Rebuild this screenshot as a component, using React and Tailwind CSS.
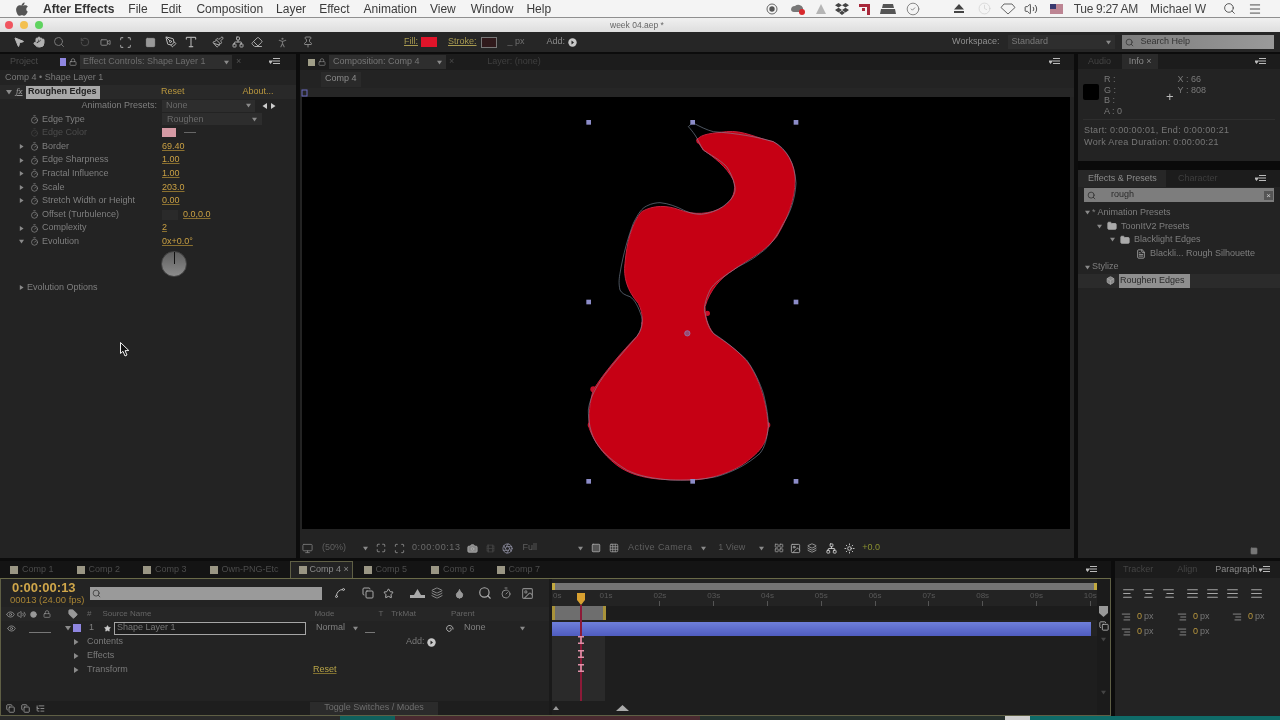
import React from "react";
import {
  MousePointer2, Hand, Search, RotateCcw, Video, Scan, Square, PenTool, Type, Paintbrush, Eraser,
  PersonStanding, Pin, Timer, Lock, Folder, FileText, Camera, Grid3x3, Eye, Volume2, Circle, Tag, Star,
  CheckCircle2, Layers, Box, Clock, Film, Image as ImageIcon, Sun, Network, Monitor, Maximize, Menu,
  AlignLeft, AlignCenter, AlignRight, AlignJustify, Aperture, LayoutGrid, Copy, Spline, Droplet, ListTree,
} from "lucide-react";

const Tri = ({ dir = "r", c = "#8a8a8a", s = 6 }) => (
  <svg width={s} height={s} viewBox="0 0 6 6" className="shrink-0">
    <path d={dir === "r" ? "M1 0 L5.5 3 L1 6Z" : dir === "l" ? "M5 0 L.5 3 L5 6Z" : "M0 1 L6 1 L3 5.5Z"} fill={c} />
  </svg>
);

const PanelMenu = ({ className = "" }) => (
  <svg width="11" height="8" viewBox="0 0 11 8" className={"shrink-0 " + className}>
    <path d="M0 3 L3 3 L1.5 5Z M4 0.5h7M4 3h7M4 5.5h7" fill="#bbb" stroke="#bbb" strokeWidth="1.2" />
  </svg>
);

const AddBtn = () => (
  <svg width="9" height="9" viewBox="0 0 9 9" className="shrink-0">
    <circle cx="4.5" cy="4.5" r="4.2" fill="#c8c8c8" />
    <path d="M3.5 2.5 L6 4.5 L3.5 6.5Z" fill="#222" />
  </svg>
);

function MenuBar() {
  return (
    <div className="h-[18px] shrink-0 bg-[#f4f4f4] border-b border-[#8f8f8f] flex items-center text-[12px] text-[#3a3a3a] relative">
      <svg width="12" height="14" viewBox="0 0 12 14" className="ml-[16px] shrink-0">
        <path fill="#555" d="M8.6 0.5c.1 1-.3 1.9-.9 2.6-.6.7-1.5 1.2-2.3 1.1-.1-.9.4-1.9.9-2.5C6.9 1 7.900.6 8.600.5zM11.500 10c-.3.8-.5 1.100-.9 1.800-.6.900-1.400 2-2.400 2-.9 0-1.100-.6-2.300-.6s-1.500.6-2.300.6c-1 0-1.800-1-2.300-1.900C-.2 9.300-.3 6.500.9 4.900c.7-1 1.800-1.600 2.900-1.600 1.100 0 1.800.6 2.700.6.900 0 1.400-.6 2.700-.6 1 0 2 .5 2.600 1.400-2.300 1.300-1.900 4.500.7 5.300z" />
      </svg>
      <span className="ml-[15px] font-bold text-[#333]">After Effects</span>
      <span className="ml-[14px]">File</span>
      <span className="ml-[13px]">Edit</span>
      <span className="ml-[15px]">Composition</span>
      <span className="ml-[13px]">Layer</span>
      <span className="ml-[13px]">Effect</span>
      <span className="ml-[14px]">Animation</span>
      <span className="ml-[13px]">View</span>
      <span className="ml-[15px]">Window</span>
      <span className="ml-[13px]">Help</span>
      <div className="ml-auto flex items-center text-[#444]">
        <svg width="12" height="12" viewBox="0 0 12 12" className="shrink-0"><circle cx="6" cy="6" r="5" fill="none" stroke="#666" /><circle cx="6" cy="6" r="2.700" fill="#555" /></svg>
        <svg width="16" height="12" viewBox="0 0 16 12" className="ml-[12px] shrink-0"><path d="M1 7a4 4 0 0 1 4-4 5 5 0 0 1 8 2v4H4a3 3 0 0 1-3-2z" fill="#777" /><circle cx="12" cy="9" r="3" fill="#d8282c" /></svg>
        <svg width="12" height="12" viewBox="0 0 12 12" className="ml-[9px] shrink-0"><path d="M6 1 L11 11 H1Z" fill="#b5b5b5" /></svg>
        <svg width="14" height="12" viewBox="0 0 14 12" className="ml-[8px] shrink-0"><path d="M3.500 0 L7 2.300 L3.500 4.600 L0 2.300Z M10.500 0 L14 2.300 L10.500 4.600 L7 2.300Z M3.500 4.800 L7 7.100 L3.500 9.400 L0 7.100Z M10.500 4.800 L14 7.100 L10.500 9.400 L7 7.100Z M7 7.800 L10 9.800 L7 12 L4 9.800Z" fill="#444" /></svg>
        <svg width="11" height="12" viewBox="0 0 11 12" className="ml-[10px] shrink-0"><path d="M0 1h11v11H8V4H0z M3 5h3v3H3z" fill="#a8283a" /></svg>
        <svg width="16" height="10" viewBox="0 0 16 10" className="ml-[10px] shrink-0"><path d="M3 0h10l1 4H2z M1 5h14l1 5H0z" fill="#555" /></svg>
        <CheckCircle2 size={14} strokeWidth={1.500} className="ml-[10px] text-[#777] shrink-0" />
        <svg width="10" height="9" viewBox="0 0 10 9" className="ml-[34px] shrink-0"><path d="M5 0 L10 5.500 H0Z M0 7h10v2H0z" fill="#444" /></svg>
        <Clock size={13} strokeWidth={1.200} className="ml-[14px] text-[#ccc] shrink-0" />
        <svg width="16" height="12" viewBox="0 0 16 12" className="ml-[9px] shrink-0"><path d="M4 1h8l3 3.500L8 11 1 4.500z" fill="none" stroke="#666" /></svg>
        <Volume2 size={14} strokeWidth={1.600} className="ml-[8px] text-[#444] shrink-0" />
        <svg width="13" height="10" viewBox="0 0 13 10" className="ml-[12px] shrink-0"><rect width="13" height="10" fill="#c9c9d6" /><path d="M0 1h13M0 3h13M0 5h13M0 7h13M0 9h13" stroke="#b04050" /><rect width="6" height="5" fill="#39396f" /></svg>
        <span className="ml-[11px] whitespace-nowrap tracking-[-0.300px]">Tue 9:27 AM</span>
        <span className="ml-[12px] whitespace-nowrap">Michael W</span>
        <Search size={13} strokeWidth={1.600} className="ml-[17px] text-[#444] shrink-0" />
        <Menu size={14} strokeWidth={1.600} className="ml-[12px] mr-[18px] text-[#444] shrink-0" />
      </div>
    </div>
  );
}

function TitleBar() {
  return (
    <div className="h-[14px] shrink-0 bg-gradient-to-b from-[#f0f0f0] to-[#dedede] flex items-center relative">
      <div className="flex gap-[7px] pl-[5px]">
        <div className="w-[8px] h-[8px] rounded-full bg-[#f0555f]" />
        <div className="w-[8px] h-[8px] rounded-full bg-[#f3c04f]" />
        <div className="w-[8px] h-[8px] rounded-full bg-[#5fd35f]" />
      </div>
      <span className="absolute left-[610px] text-[8.500px] text-[#666] whitespace-nowrap">week 04.aep *</span>
    </div>
  );
}

function Toolbar() {
  return (
    <div className="h-[22px] shrink-0 bg-[#262626] border-b-2 border-[#0c0c0c] flex items-center text-[9px] text-[#7d7d7d]">
      <MousePointer2 size={12} className="ml-[13px] text-[#b8b8b8] shrink-0" fill="#b8b8b8" />
      <Hand size={12} className="ml-[8px] text-[#b0b0b0] shrink-0" fill="#b0b0b0" />
      <Search size={12} className="ml-[8px] text-[#777] shrink-0" />
      <RotateCcw size={10} className="ml-[15px] text-[#555] shrink-0" />
      <Video size={11} className="ml-[10px] text-[#888] shrink-0" />
      <Scan size={13} className="ml-[8px] text-[#999] shrink-0" />
      <Square size={11} className="ml-[13px] text-[#999] shrink-0" fill="#999" />
      <PenTool size={12} className="ml-[9px] text-[#bbb] shrink-0" />
      <Type size={14} className="ml-[7px] text-[#aaa] shrink-0" />
      <Paintbrush size={12} className="ml-[14px] text-[#aaa] shrink-0" />
      <Network size={12} className="ml-[8px] text-[#aaa] shrink-0" />
      <Eraser size={12} className="ml-[7px] text-[#aaa] shrink-0" />
      <PersonStanding size={13} className="ml-[13px] text-[#777] shrink-0" />
      <Pin size={12} className="ml-[13px] text-[#888] shrink-0" />
      <span className="ml-[90px] text-[#a89a50] underline">Fill:</span>
      <div className="ml-[3px] w-[16px] h-[10px] bg-[#e0142a] shrink-0" />
      <span className="ml-[11px] text-[#a89a50] underline">Stroke:</span>
      <div className="ml-[4px] w-[16px] h-[11px] bg-[#301a1c] border border-[#777] shrink-0" />
      <span className="ml-[11px] text-[#6f6f6f]">_ px</span>
      <span className="ml-[22px] text-[#8a8a8a]">Add:</span>
      <div className="ml-[3px]"><AddBtn /></div>
      <span className="ml-[375px] whitespace-nowrap text-[#8f8f8f]">Workspace:</span>
      <div className="ml-[9px] w-[107px] h-[14px] bg-[#2e2e2e] flex items-center justify-between pl-[3px] pr-[4px] text-[#7a7a7a]">
        <span>Standard</span><Tri dir="d" s={5} />
      </div>
      <div className="ml-[7px] w-[152px] h-[14px] bg-gradient-to-r from-[#7c7c7c] to-[#9a9a9a] flex items-center pl-[3px] text-[#333]">
        <Search size={9} className="text-[#333] shrink-0" />
        <span className="ml-[6px]">Search Help</span>
      </div>
    </div>
  );
}

const S = ({ off }) => <Timer size={9} strokeWidth={1.800} className={off ? "text-[#444] shrink-0" : "text-[#8f8f8f] shrink-0"} />;

const Row = ({ tri, label, value, dim, children }) => (
  <div className="h-[13.600px] flex items-center pl-[19px]">
    <div className="w-[11px] flex">{tri && <Tri dir={tri} s={5} />}</div>
    <div className="w-[12px] flex"><S off={dim} /></div>
    <span className={"w-[120px] whitespace-nowrap " + (dim ? "text-[#4c4c4c]" : "text-[#7f7f7f]")}>{label}</span>
    {value && <span className="text-[#c9a043] underline decoration-[#8a7030]">{value}</span>}
    {children}
  </div>
);

function EffectPanel() {
  return (
    <div className="w-[296px] shrink-0 bg-[#232323] flex flex-col text-[9px] overflow-hidden">
      <div className="h-[16px] shrink-0 bg-[#1c1c1c] flex items-center text-[#4a4a4a]">
        <span className="ml-[10px]">Project</span>
        <div className="ml-[22px] w-[6px] h-[8px] bg-[#8f86e0] shrink-0" />
        <Lock size={8} className="ml-[3px] text-[#999] shrink-0" />
        <div className="ml-[3px] w-[152px] h-[14px] bg-[#2e2e2e] flex items-center px-[3px] justify-between text-[#6e6e6e]">
          <span className="whitespace-nowrap">Effect Controls: Shape Layer 1</span><Tri dir="d" s={5} />
        </div>
        <span className="ml-[4px] text-[#555]">×</span>
        <PanelMenu className="ml-[28px]" />
      </div>
      <div className="h-[15px] shrink-0 flex items-center pl-[5px] text-[#7a7a7a] whitespace-nowrap">Comp 4 • Shape Layer 1</div>
      <div className="h-[14px] shrink-0 flex items-center pl-[6px] bg-[#292929]">
        <Tri dir="d" s={6} />
        <span className="ml-[4px] w-[10px] italic font-serif text-[#999] underline">fx</span>
        <span className="w-[74px] h-[13px] bg-[#a8a8a8] text-[#222] font-bold flex items-center pl-[2px] whitespace-nowrap">Roughen Edges</span>
        <span className="ml-[61px] text-[#b9973e]">Reset</span>
        <span className="ml-[58px] text-[#b9973e] whitespace-nowrap">About...</span>
      </div>
      <div className="h-[13.600px] flex items-center">
        <span className="w-[157px] text-right text-[#7f7f7f] whitespace-nowrap">Animation Presets:</span>
        <div className="ml-[5px] w-[93px] h-[12px] bg-[#2d2d2d] flex items-center justify-between px-[4px] text-[#6a6a6a]"><span>None</span><Tri dir="d" s={5} /></div>
        <div className="ml-[7px] flex gap-[2px]"><Tri dir="l" c="#ccc" /><Tri c="#ccc" /></div>
      </div>
      <Row label="Edge Type"><div className="w-[100px] h-[12px] bg-[#2d2d2d] flex items-center justify-between px-[5px] text-[#6a6a6a]"><span>Roughen</span><Tri dir="d" s={5} /></div></Row>
      <Row label="Edge Color" dim><div className="w-[14px] h-[9px] bg-[#d59aa4] shrink-0" /><div className="ml-[8px] w-[12px] h-px bg-[#666]" /></Row>
      <Row tri="r" label="Border" value="69.40" />
      <Row tri="r" label="Edge Sharpness" value="1.00" />
      <Row tri="r" label="Fractal Influence" value="1.00" />
      <Row tri="r" label="Scale" value="203.0" />
      <Row tri="r" label="Stretch Width or Height" value="0.00" />
      <Row label="Offset (Turbulence)"><div className="w-[16px] h-[10px] bg-[#2a2a2a] shrink-0" /><span className="ml-[5px] text-[#c9a043] underline decoration-[#8a7030]">0.0,0.0</span></Row>
      <Row tri="r" label="Complexity" value="2" />
      <Row tri="d" label="Evolution" value="0x+0.0°" />
      <div className="h-[27px] pl-[161px] pt-[2px]">
        <div className="w-[26px] h-[26px] rounded-full bg-gradient-to-b from-[#5f5f5f] to-[#8c8c8c] border border-[#444] flex justify-center">
          <div className="w-px h-[12px] bg-[#111]" />
        </div>
      </div>
      <div className="h-[14px] mt-[5px] pl-[19px] flex items-center text-[#7f7f7f]"><Tri s={5} /><span className="ml-[3px] whitespace-nowrap">Evolution Options</span></div>
      <div className="pl-[120px] pt-[47px]">
        <svg width="10" height="15" viewBox="0 0 10 15"><path d="M0.500 0.500 L0.500 11.500 L3 9.300 L5 14 L7 13 L5 8.700 L8.800 8.500Z" fill="#111" stroke="#eee" /></svg>
      </div>
    </div>
  );
}

const handles = [[56, 67], [368, 67], [678, 67], [56, 606], [678, 606], [56, 1144], [368, 1144], [678, 1144]];
const bumps = [[70, 868, 9], [62, 975, 9], [592, 975, 9], [222, 670, 8], [412, 640, 8], [388, 122, 9]];

function Shape() {
  return (
    <svg viewBox="0 0 750 1200" className="absolute left-[268px] top-[3px] w-[250px] h-[400px]">
      {bumps.map(([x, y, r], i) => <circle key={i} cx={x} cy={y} r={r} fill="#c6102a" />)}
      <path fill="#c60014" stroke="#c8203c" strokeWidth="3" d="M380 120 C395 100 430 100 470 95 C520 90 560 115 610 125 C650 150 675 190 675 240 C675 300 650 360 620 410 C580 460 530 480 490 510 C450 535 420 570 405 620 C405 660 420 690 435 705 C480 735 530 770 550 815 C575 860 590 920 595 980 C590 1040 560 1060 530 1085 C490 1115 420 1140 360 1140 C280 1140 200 1140 140 1095 C95 1060 70 1020 58 985 C55 950 60 900 70 870 C100 820 160 750 200 710 C225 680 220 640 205 610 C170 570 160 530 165 490 C170 430 185 370 215 335 C250 315 290 315 330 330 C370 345 420 345 460 320 C490 300 500 270 490 240 C470 200 430 170 400 150Z" />
      <path fill="none" stroke="#7f8da0" strokeWidth="1.800" d="M368 68 C390 80 410 90 430 95 C500 100 560 110 610 125 C650 145 675 190 678 250 C675 300 660 340 640 370 C620 410 600 440 570 460 C540 485 510 495 490 510 C460 530 430 550 420 570 C405 600 400 630 405 640 C410 670 420 690 430 700 C470 725 510 760 530 780 C555 815 570 850 580 880 C590 920 595 950 595 980 C590 1020 585 1040 570 1060 C530 1095 490 1115 440 1130 C390 1140 340 1142 300 1140 C250 1135 210 1130 170 1110 C130 1085 100 1060 80 1030 C60 1000 55 960 55 930 C60 890 80 860 100 830 C130 790 170 745 200 710 C215 690 218 670 215 650 C205 620 195 600 180 590 C165 585 155 580 150 570 C145 550 148 530 150 520 C160 460 175 410 190 370 C205 340 215 325 230 318 C245 310 260 308 270 308 C295 310 320 320 340 330 C360 340 385 345 400 342 C430 338 455 325 470 310 C490 295 498 275 495 260 C490 235 480 215 470 200 C445 175 420 165 400 150 C390 135 385 120 375 105 C368 95 360 85 355 80Z" />
      {handles.map(([x, y], i) => <rect key={i} x={x - 7} y={y - 7} width="14" height="14" fill="#8c8cc8" />)}
      <circle cx="352" cy="700" r="8" fill="#9a4a70" stroke="#8c8cc8" strokeWidth="2" />
    </svg>
  );
}

function CompPanel() {
  return (
    <div className="w-[774px] shrink-0 ml-[4px] bg-[#232323] flex flex-col text-[9px] text-[#7a7a7a]">
      <div className="h-[16px] shrink-0 bg-[#1c1c1c] flex items-center">
        <div className="ml-[8px] w-[7px] h-[7px] bg-[#a09e88] shrink-0" />
        <Lock size={8} className="ml-[3px] text-[#888] shrink-0" />
        <div className="ml-[3px] w-[117px] h-[14px] bg-[#2e2e2e] flex items-center justify-between px-[4px] text-[#777]">
          <span className="whitespace-nowrap">Composition: Comp 4</span><Tri dir="d" s={5} />
        </div>
        <span className="ml-[3px] text-[#4a4a4a]">×</span>
        <span className="ml-[33px] text-[#3f3f3f] whitespace-nowrap">Layer: (none)</span>
        <PanelMenu className="ml-auto mr-[14px]" />
      </div>
      <div className="h-[18px] shrink-0 flex items-center pl-[21px]">
        <span className="px-[4px] h-[15px] flex items-center bg-[#2a2a2a] text-[#8a8a8a]">Comp 4</span>
      </div>
      <div className="h-[9px] shrink-0 bg-[#262626] flex items-end">
        <svg width="7" height="8" viewBox="0 0 7 8" className="ml-px"><rect x="1" y="1" width="5" height="6" fill="none" stroke="#6a6ac0" /></svg>
      </div>
      <div className="ml-[2px] w-[768px] h-[432px] shrink-0 bg-black relative">
        <Shape />
      </div>
      <div className="h-[11px] shrink-0" />
      <div className="h-[16px] shrink-0 flex items-center text-[#5f5f5f] whitespace-nowrap">
        <Monitor size={11} className="ml-[2px] text-[#777] shrink-0" />
        <span className="ml-[9px]">(50%)</span>
        <div className="ml-[17px]"><Tri dir="d" s={5} /></div>
        <Maximize size={10} className="ml-[8px] text-[#999] shrink-0" />
        <Scan size={11} className="ml-[8px] text-[#999] shrink-0" />
        <span className="ml-[7px] text-[#6b6b6b] tracking-[0.600px]">0:00:00:13</span>
        <Camera size={11} className="ml-[6px] text-[#aaa] shrink-0" fill="#888" />
        <Film size={9} className="ml-[8px] text-[#444] shrink-0" />
        <Aperture size={11} className="ml-[7px] text-[#889] shrink-0" />
        <span className="ml-[10px]">Full</span>
        <div className="ml-[41px]"><Tri dir="d" s={5} /></div>
        <Square size={10} className="ml-[8px] text-[#aaa] shrink-0" fill="#555" />
        <Grid3x3 size={10} className="ml-[8px] text-[#999] shrink-0" />
        <span className="ml-[9px] tracking-[0.400px]">Active Camera</span>
        <div className="ml-[9px]"><Tri dir="d" s={5} /></div>
        <span className="ml-[12px]">1 View</span>
        <div className="ml-[14px]"><Tri dir="d" s={5} /></div>
        <LayoutGrid size={10} className="ml-[10px] text-[#999] shrink-0" />
        <ImageIcon size={11} className="ml-[6px] text-[#aaa] shrink-0" />
        <Layers size={10} className="ml-[6px] text-[#aaa] shrink-0" />
        <Network size={11} className="ml-[9px] text-[#ccc] shrink-0" />
        <Sun size={11} className="ml-[7px] text-[#ccc] shrink-0" />
        <span className="ml-[7px] text-[#8a9030]">+0.0</span>
      </div>
    </div>
  );
}

const Tree = ({ pad, tri, icon, label, sel }) => (
  <div className={"h-[13.600px] flex items-center whitespace-nowrap " + pad + (sel ? " bg-[#2b2b2b]" : "")}>
    {tri && <Tri dir="d" s={5} />}
    {icon === "folder" && <Folder size={10} fill="#aaa" className="ml-[5px] text-[#aaa] shrink-0" />}
    {icon === "file" && <FileText size={10} className="text-[#aaa] shrink-0" />}
    {icon === "fx" && <Box size={9} fill="#888" className="text-[#aaa] shrink-0" />}
    <span className={sel ? "ml-[4px] px-[1px] w-[71px] bg-[#8f8f8f] text-[#2a2a2a]" : (icon ? "ml-[4px] text-[#7e7e7e]" : "ml-[2px] text-[#7e7e7e]")}>{label}</span>
  </div>
);

function RightPanel() {
  return (
    <div className="flex-1 ml-[4px] flex flex-col text-[9px] text-[#7a7a7a] min-w-0">
      <div className="h-[107px] shrink-0 bg-[#232323] flex flex-col">
        <div className="h-[15px] shrink-0 bg-[#1c1c1c] flex items-center">
          <span className="ml-[10px] text-[#444]">Audio</span>
          <div className="ml-[11px] h-[15px] w-[36px] bg-[#2a2a2a] flex items-center justify-center text-[#8a8a8a] whitespace-nowrap">Info ×</div>
          <PanelMenu className="ml-auto mr-[14px]" />
        </div>
        <div className="flex h-[50px] pl-[5px] pt-[5px]">
          <div className="mt-[10px] w-[16px] h-[16px] bg-black rounded-[2px] shrink-0" />
          <div className="ml-[5px] w-[62px] flex flex-col leading-[10.500px]">
            <span>R :</span><span>G :</span><span>B :</span><span>A : 0</span>
          </div>
          <div className="flex items-start">
            <span className="mt-[16px] text-[13px] leading-[13px] text-[#bbb]">+</span>
            <div className="ml-[4px] flex flex-col leading-[10.500px]">
              <span>X : 66</span><span>Y : 808</span>
            </div>
          </div>
        </div>
        <div className="mx-[5px] h-px bg-[#2e2e2e]" />
        <div className="pl-[6px] pt-[4px] leading-[12px] tracking-[0.300px] whitespace-nowrap text-[#777]">
          <div>Start: 0:00:00:01, End: 0:00:00:21</div>
          <div>Work Area Duration: 0:00:00:21</div>
        </div>
      </div>
      <div className="h-[9px] shrink-0 bg-[#0a0a0a]" />
      <div className="flex-1 bg-[#232323] flex flex-col">
        <div className="h-[17px] shrink-0 bg-[#1c1c1c] flex items-center">
          <div className="h-[17px] w-[88px] bg-[#272727] flex items-center pl-[10px] text-[#8a8a8a] whitespace-nowrap">Effects &amp; Presets</div>
          <span className="ml-[12px] text-[#3e3e3e]">Character</span>
          <PanelMenu className="ml-auto mr-[14px]" />
        </div>
        <div className="mx-[6px] mt-[1px] h-[14px] shrink-0 bg-[#7d7d7d] flex items-center pl-[3px] pr-[1px] text-[#2b2b2b]">
          <Search size={9} className="shrink-0" />
          <span className="ml-[15px]">rough</span>
          <div className="ml-auto w-[9px] h-[9px] bg-[#555] text-[#ccc] text-[8px] leading-[9px] text-center">×</div>
        </div>
        <div className="h-[4px]" />
        <Tree pad="pl-[7px]" tri label="* Animation Presets" />
        <Tree pad="pl-[19px]" tri icon="folder" label="ToonItV2 Presets" />
        <Tree pad="pl-[32px]" tri icon="folder" label="Blacklight Edges" />
        <Tree pad="pl-[58px]" icon="file" label="Blackli... Rough Silhouette" />
        <Tree pad="pl-[7px]" tri label="Stylize" />
        <Tree pad="pl-[28px]" icon="fx" label="Roughen Edges" sel />
        <div className="mt-auto mb-[3px] flex justify-end pr-[22px]"><Square size={8} fill="#777" className="text-[#777]" /></div>
      </div>
    </div>
  );
}

const TabItem = ({ label, className }) => (
  <div className={"flex items-center shrink-0 " + className}>
    <div className="w-[8px] h-[8px] bg-[#9a9684] shrink-0" />
    <span className="ml-[4px] whitespace-nowrap text-[#4c4c4c]">{label}</span>
  </div>
);

const Hd = ({ className, children }) => <span className={"whitespace-nowrap text-[8px] text-[#666] " + className}>{children}</span>;

const ticks = ["02s", "03s", "04s", "05s", "06s", "07s", "08s", "09s", "10s"];

function Timeline() {
  return (
    <div className="w-[1111px] shrink-0 flex flex-col text-[9px]">
      <div className="h-[17px] shrink-0 flex items-end bg-[#141414]">
        <TabItem className="ml-[10px] h-[16px]" label="Comp 1" />
        <TabItem className="ml-[23px] h-[16px]" label="Comp 2" />
        <TabItem className="ml-[23px] h-[16px]" label="Comp 3" />
        <TabItem className="ml-[23px] h-[16px]" label="Own-PNG-Etc" />
        <div className="ml-[11px] w-[63px] h-[17px] bg-[#232323] border-t border-x border-[#5f5f45] flex items-center pl-[8px] shrink-0">
          <div className="w-[8px] h-[8px] bg-[#9a9684] shrink-0" />
          <span className="ml-[3px] text-[#8a8a8a] whitespace-nowrap">Comp 4 ×</span>
        </div>
        <TabItem className="ml-[11px] h-[16px]" label="Comp 5" />
        <TabItem className="ml-[24px] h-[16px]" label="Comp 6" />
        <TabItem className="ml-[22px] h-[16px]" label="Comp 7" />
        <PanelMenu className="ml-auto mr-[14px] mb-[4px]" />
      </div>
      <div className="flex-1 border border-[#5f5f45] border-t-[#6a6a48] bg-[#232323] flex min-h-0">
        <div className="w-[548px] shrink-0 flex flex-col">
          <div className="h-[28px] shrink-0 flex items-center">
            <div className="ml-[9px] w-[71px] shrink-0 flex flex-col whitespace-nowrap">
              <span className="text-[13px] leading-[13px] font-bold text-[#cfa64a] pl-[2px]">0:00:00:13</span>
              <span className="text-[9.500px] leading-[11px] text-[#a88434]">00013 (24.00 fps)</span>
            </div>
            <div className="ml-[9px] w-[232px] h-[13px] bg-[#9a9a9a] flex items-center pl-[2px] shrink-0"><Search size={9} className="text-[#333]" /></div>
            <Spline size={12} className="ml-[12px] text-[#bbb] shrink-0" />
            <Copy size={12} className="ml-[16px] text-[#aaa] shrink-0" />
            <Star size={11} className="ml-[9px] text-[#bbb] shrink-0" />
            <svg width="15" height="10" viewBox="0 0 15 10" className="ml-[16px] shrink-0"><path d="M0 10V7h4l3.500-6L11 7h4v3z" fill="#aaa" /></svg>
            <Layers size={12} className="ml-[6px] text-[#888] shrink-0" />
            <Droplet size={11} fill="#999" className="ml-[11px] text-[#999] shrink-0" />
            <Search size={14} className="ml-[13px] text-[#aaa] shrink-0" />
            <Timer size={12} className="ml-[8px] text-[#888] shrink-0" />
            <ImageIcon size={13} className="ml-[9px] text-[#888] shrink-0" />
          </div>
          <div className="h-[14px] shrink-0 bg-[#262626] flex items-center">
            <Eye size={9} className="ml-[5px] text-[#999] shrink-0" />
            <Volume2 size={9} className="ml-[2px] text-[#999] shrink-0" />
            <Circle size={7} fill="#999" className="ml-[4px] text-[#999] shrink-0" />
            <Lock size={8} className="ml-[6px] text-[#999] shrink-0" />
            <Tag size={10} fill="#999" className="ml-[17px] text-[#999] shrink-0" />
            <Hd className="ml-[9px]">#</Hd>
            <Hd className="ml-[11px]">Source Name</Hd>
            <Hd className="ml-[163px]">Mode</Hd>
            <Hd className="ml-[44px]">T</Hd>
            <Hd className="ml-[8px]">TrkMat</Hd>
            <Hd className="ml-[35px]">Parent</Hd>
          </div>
          <div className="h-[14px] shrink-0 flex items-center text-[#808080]">
            <Eye size={9} className="ml-[6px] text-[#999] shrink-0" />
            <div className="ml-[13px] w-[22px] h-px mt-[8px] bg-[#777]" />
            <div className="ml-[14px]"><Tri dir="d" s={6} /></div>
            <div className="ml-[2px] w-[8px] h-[8px] bg-[#8f86e0] shrink-0" />
            <span className="ml-[8px]">1</span>
            <Star size={7} fill="#ccc" className="ml-[10px] text-[#ccc] shrink-0" />
            <div className="ml-[3px] w-[192px] h-[13px] shrink-0 border border-[#a5a5a5] bg-[#1d1d1d] flex items-center pl-[2px] whitespace-nowrap text-[#777]">Shape Layer 1</div>
            <span className="ml-[10px]">Normal</span>
            <div className="ml-[8px]"><Tri dir="d" s={5} /></div>
            <div className="ml-[7px] w-[10px] h-px mt-[8px] bg-[#777]" />
            <svg width="9" height="9" viewBox="0 0 9 9" className="ml-[70px] shrink-0"><path d="M4.500 4.500a1 1 0 0 1 1.500 0 2 2 0 0 1-3 2.500A3 3 0 0 1 4 1.500a3.500 3.500 0 0 1 4 4" fill="none" stroke="#aaa" /></svg>
            <span className="ml-[10px] w-[56px]">None</span>
            <Tri dir="d" s={5} />
          </div>
          <div className="h-[14px] flex items-center text-[#7a7a7a]">
            <div className="ml-[72px]"><Tri s={6} /></div>
            <span className="ml-[8px] w-[319px]">Contents</span>
            <span>Add:</span>
            <div className="ml-[2px]"><AddBtn /></div>
          </div>
          <div className="h-[14px] flex items-center text-[#7a7a7a]">
            <div className="ml-[72px]"><Tri s={6} /></div>
            <span className="ml-[8px]">Effects</span>
          </div>
          <div className="h-[14px] flex items-center text-[#7a7a7a]">
            <div className="ml-[72px]"><Tri s={6} /></div>
            <span className="ml-[8px] w-[226px]">Transform</span>
            <span className="text-[#b9a548] underline decoration-[#807030]">Reset</span>
          </div>
          <div className="mt-auto h-[14px] shrink-0 bg-[#1e1e1e] flex items-center">
            <Copy size={9} className="ml-[5px] text-[#aaa] shrink-0" />
            <Copy size={9} className="ml-[6px] text-[#aaa] shrink-0" />
            <ListTree size={9} className="ml-[6px] text-[#aaa] shrink-0" />
            <div className="ml-[265px] w-[128px] h-[13px] bg-[#2b2b2b] flex items-center justify-center text-[#6e6e6e] whitespace-nowrap">Toggle Switches / Modes</div>
          </div>
        </div>
        <div className="w-[3px] shrink-0 bg-[#1a1a1a]" />
        <div className="w-[545px] shrink-0 flex flex-col relative">
          <div className="h-[4px] shrink-0" />
          <div className="h-[7px] shrink-0 bg-[#757575] flex justify-between">
            <div className="w-[3px] bg-[#c2a93f]" /><div className="w-[3px] bg-[#c2a93f]" />
          </div>
          <div className="h-[16px] shrink-0 flex items-start text-[8px] text-[#585858]">
            <span className="w-[27px] pl-[1px] pt-[1px] leading-[10px] shrink-0">0s</span>
            <span className="w-[54px] text-center pt-[1px] leading-[10px] shrink-0">01s</span>
            {ticks.map(t => (
              <div key={t} className="w-[53.800px] flex flex-col items-center pt-[1px] shrink-0 leading-[10px]">
                <span>{t}</span><div className="w-px h-[5px] bg-[#555]" />
              </div>
            ))}
          </div>
          <div className="h-[14px] shrink-0 bg-[#1c1c1c] flex">
            <div className="w-[54px] bg-[#6e6e6e] border-x-[3px] border-[#a8923a]" />
          </div>
          <div className="h-[2px] shrink-0" />
          <div className="h-[14px] w-[539px] shrink-0 bg-gradient-to-b from-[#6f80dc] to-[#4f5cc0]" />
          <div className="flex-1 min-h-0 bg-[#1e1e1e]">
            <div className="w-[53px] h-[65px] bg-[#2a2a2a]" />
          </div>
          <div className="h-[14px] shrink-0 bg-[#1e1e1e] flex items-center">
            <svg width="6" height="4" viewBox="0 0 6 4" className="ml-[1px] shrink-0"><path d="M0 4 L3 0 L6 4Z" fill="#999" /></svg>
            <svg width="13" height="6" viewBox="0 0 13 6" className="ml-[57px] shrink-0"><path d="M0 6 L6.500 0 L13 6Z" fill="#aaa" /></svg>
          </div>
          <div className="absolute left-[25px] top-[14px] flex flex-col items-center h-[108px]">
            <svg width="8" height="12" viewBox="0 0 8 12" className="shrink-0"><path d="M0 0h8v7L4 12 0 7z" fill="#d8a030" /></svg>
            <div className="w-[2px] flex-1 bg-[#8c1a38]" />
          </div>
          <div className="absolute left-[26px] top-[57px] flex flex-col gap-[6px]">
            {[0, 1, 2].map(i => (
              <svg key={i} width="6" height="8" viewBox="0 0 6 8"><path d="M0 .7h6M0 7.300h6M3 0v8" stroke="#e090a8" strokeWidth="1.600" /></svg>
            ))}
          </div>
        </div>
        <div className="flex-1 bg-[#1b1b1b] flex flex-col items-center pt-[27px]">
          <svg width="9" height="11" viewBox="0 0 9 11"><path d="M0 0h9v7L4.500 11 0 7z" fill="#999" /></svg>
          <Copy size={10} className="mt-[4px] text-[#bbb]" />
          <div className="mt-[6px]"><Tri dir="d" s={5} c="#444" /></div>
          <div className="mt-[48px]"><Tri dir="d" s={5} c="#444" /></div>
        </div>
      </div>
    </div>
  );
}

const alignIcons = [AlignLeft, AlignCenter, AlignRight, AlignJustify, AlignJustify, AlignJustify, AlignJustify];
const ParaVal = ({ className = "" }) => (
  <div className={"flex items-center text-[9px] " + className}>
    <AlignRight size={10} className="text-[#999] shrink-0" />
    <span className="ml-[6px] text-[#b9973e]">0</span>
    <span className="ml-[2px] text-[#777]">px</span>
  </div>
);

function Paragraph() {
  return (
    <div className="flex-1 ml-[4px] bg-[#232323] flex flex-col text-[9px]">
      <div className="h-[17px] shrink-0 bg-[#1c1c1c] flex items-center">
        <span className="ml-[8px] text-[#444]">Tracker</span>
        <span className="ml-[24px] text-[#444]">Align</span>
        <span className="ml-[18px] whitespace-nowrap text-[#8a8a8a]">Paragraph</span>
        <PanelMenu className="ml-[2px]" />
      </div>
      <div className="h-[31px] shrink-0 flex items-center pl-[7px]">
        {alignIcons.map((I, i) => (
          <I key={i} size={13} strokeWidth={2} className={"text-[#a5a5a5] shrink-0 " + (i === 0 ? "" : i === 3 ? "ml-[11px]" : i === 6 ? "ml-[11px]" : "ml-[7px]")} />
        ))}
      </div>
      <div className="h-[15px] flex items-center pl-[6px]">
        <ParaVal className="w-[56px]" /><ParaVal className="w-[55px]" /><ParaVal />
      </div>
      <div className="h-[15px] flex items-center pl-[6px]">
        <ParaVal className="w-[56px]" /><ParaVal />
      </div>
    </div>
  );
}

export default function App() {
  return (
    <div className="w-[1280px] h-[720px] overflow-hidden bg-[#0c0c0c] flex flex-col font-['Liberation_Sans',sans-serif] blur-[0.500px]">
      <MenuBar />
      <TitleBar />
      <Toolbar />
      <div className="h-[504px] shrink-0 flex">
        <EffectPanel />
        <CompPanel />
        <RightPanel />
      </div>
      <div className="h-[3px] shrink-0" />
      <div className="h-[155px] shrink-0 flex">
        <Timeline />
        <Paragraph />
      </div>
      <div className="h-[4px] shrink-0 flex">
        <div className="w-[340px] bg-[#2a2a2a]" />
        <div className="w-[55px] bg-[#10605c]" />
        <div className="w-[305px] bg-[#4a2a30]" />
        <div className="w-[305px] bg-[#26302c]" />
        <div className="w-[25px] bg-[#cfcfcf]" />
        <div className="flex-1 bg-[#0f6b68]" />
      </div>
    </div>
  );
}
